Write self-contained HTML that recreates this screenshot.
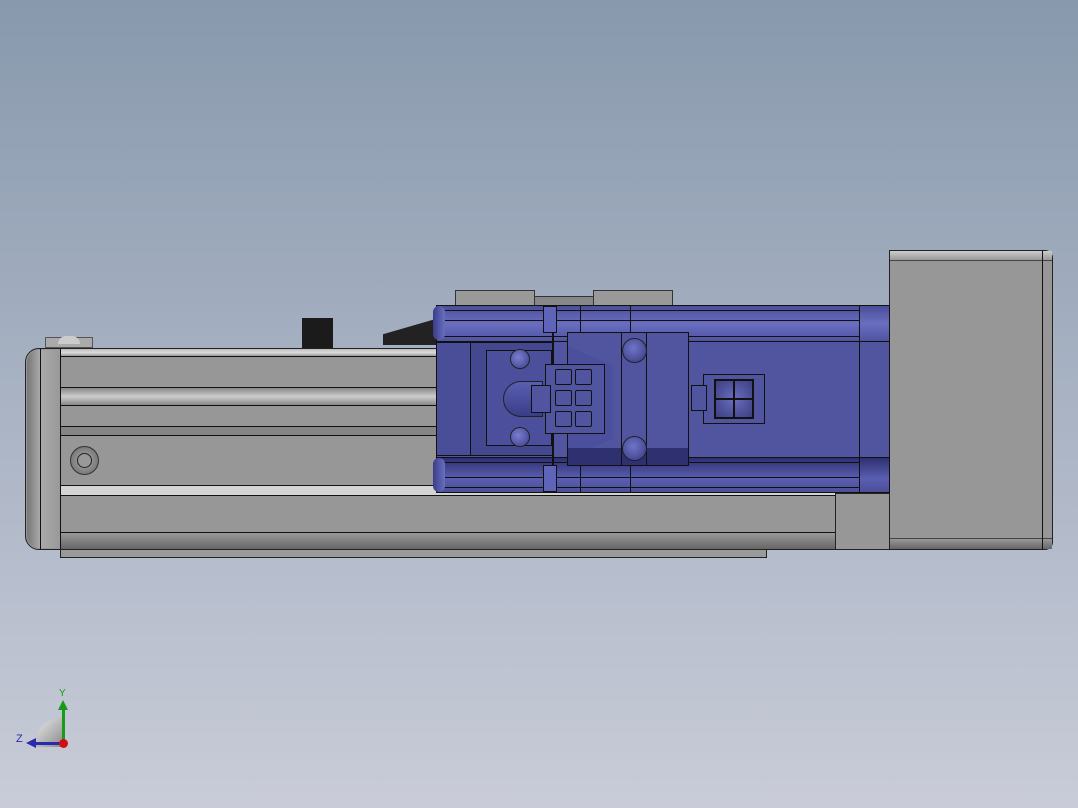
<!DOCTYPE html>
<html><head><style>
body{margin:0;width:1078px;height:808px;overflow:hidden;background:linear-gradient(#8899ad,#a9b3c4 50%,#c9ccd8);position:relative;font-family:"Liberation Sans",sans-serif}
div{position:absolute;box-sizing:border-box}
.l{background:#111}
.b{background:#5155a0;border:1px solid #111}
</style></head><body>
<!-- rail -->
<div style="left:60px;top:548px;width:707px;height:10px;background:#9a9a9a;border:1px solid #222"></div>
<div style="left:25px;top:348px;width:811px;height:202px;background:#979797;border:1px solid #222;border-radius:14px 0 0 14px"></div>
<div style="left:27px;top:350px;width:33px;height:198px;border-radius:12px 0 0 12px;background:linear-gradient(90deg,#777,#aaa 40%,#999)"></div>
<div class="l" style="left:40px;top:349px;width:1px;height:200px"></div>
<div class="l" style="left:60px;top:349px;width:1px;height:200px"></div>
<div style="left:61px;top:349px;width:775px;height:8px;background:linear-gradient(#bbb,#ddd,#999);border-bottom:1px solid #111"></div>
<div style="left:61px;top:387px;width:775px;height:19px;background:linear-gradient(#888,#ccc 50%,#888);border-top:1px solid #111;border-bottom:1px solid #111"></div>
<div style="left:61px;top:426px;width:775px;height:10px;background:#858585;border-top:1px solid #111;border-bottom:1px solid #111"></div>
<div style="left:61px;top:485px;width:775px;height:11px;background:#d4d4d4;border-top:1px solid #111;border-bottom:1px solid #111"></div>
<div class="l" style="left:61px;top:532px;width:775px;height:1px"></div>
<div style="left:61px;top:533px;width:775px;height:16px;background:linear-gradient(#999,#666)"></div>
<div style="left:70px;top:446px;width:29px;height:29px;border-radius:50%;background:radial-gradient(#aaa,#666);border:1px solid #333"></div>
<div style="left:77px;top:453px;width:15px;height:15px;border-radius:50%;border:1px solid #222;background:#999"></div>
<div style="left:45px;top:337px;width:48px;height:11px;background:#aaa;border:1px solid #555"></div>
<div style="left:58px;top:336px;width:22px;height:8px;border-radius:11px 11px 0 0;background:#ccc"></div>
<div style="left:302px;top:318px;width:31px;height:30px;background:#1b1b1b"></div>
<div style="left:383px;top:318px;width:56px;height:27px;background:#222;clip-path:polygon(0 60%,100% 0,100% 100%,0 100%)"></div>
<div style="left:835px;top:493px;width:56px;height:57px;background:#979797;border:1px solid #222"></div>
<!-- motor -->
<div style="left:889px;top:250px;width:164px;height:300px;background:#979797;border:1px solid #222;border-radius:0 8px 8px 0"></div>
<div style="left:890px;top:251px;width:162px;height:10px;background:linear-gradient(#ccc,#999);border-bottom:1px solid #444"></div>
<div style="left:890px;top:538px;width:162px;height:11px;background:linear-gradient(#999,#666);border-top:1px solid #444"></div>
<div class="l" style="left:1042px;top:251px;width:1px;height:298px"></div>
<!-- top plates -->
<div style="left:455px;top:290px;width:80px;height:16px;background:#999;border:1px solid #333"></div>
<div style="left:593px;top:290px;width:80px;height:16px;background:#999;border:1px solid #333"></div>
<div style="left:534px;top:296px;width:60px;height:10px;background:#888;border:1px solid #333"></div>
<!-- blue body -->
<div class="b" style="left:436px;top:305px;width:454px;height:188px;background:#5155a0"></div>
<div style="left:437px;top:306px;width:452px;height:36px;background:linear-gradient(#4a4e98,#6a6ec0 50%,#4f53a0);border-bottom:1px solid #111"></div>
<div class="l" style="left:437px;top:310px;width:422px;height:1px"></div>
<div class="l" style="left:437px;top:320px;width:422px;height:1px"></div>
<div class="l" style="left:437px;top:336px;width:422px;height:1px"></div>
<div style="left:437px;top:457px;width:452px;height:35px;background:linear-gradient(#2d3070,#5a5eb0 60%,#4b4f98);border-top:1px solid #111"></div>
<div class="l" style="left:437px;top:462px;width:422px;height:1px"></div>
<div class="l" style="left:437px;top:477px;width:422px;height:1px"></div>
<div class="l" style="left:437px;top:487px;width:422px;height:1px"></div>
<div style="left:433px;top:306px;width:12px;height:34px;border-radius:6px;background:linear-gradient(90deg,#3a3e88,#6a6ec0)"></div>
<div style="left:433px;top:458px;width:12px;height:34px;border-radius:6px;background:linear-gradient(90deg,#3a3e88,#6a6ec0)"></div>
<div class="l" style="left:859px;top:306px;width:1px;height:186px"></div>
<div class="l" style="left:552px;top:306px;width:2px;height:186px"></div>
<div class="l" style="left:580px;top:306px;width:1px;height:186px"></div>
<div class="l" style="left:630px;top:306px;width:1px;height:186px"></div>
<div style="left:543px;top:306px;width:14px;height:27px;background:#6064b8;border:1px solid #111"></div>
<div style="left:543px;top:465px;width:14px;height:27px;background:#6064b8;border:1px solid #111"></div>
<!-- left housing -->
<div class="b" style="left:436px;top:342px;width:117px;height:114px;background:#4a4e98"></div>
<div style="left:470px;top:343px;width:82px;height:112px;background:#44488e;border-left:1px solid #111"></div>
<div style="left:486px;top:350px;width:66px;height:96px;background:#4c509c;border:1px solid #111"></div>
<div style="left:510px;top:349px;width:20px;height:20px;border-radius:50%;background:radial-gradient(circle at 40% 40%,#7a7ed0,#3a3e88);border:1px solid #222"></div>
<div style="left:510px;top:427px;width:20px;height:20px;border-radius:50%;background:radial-gradient(circle at 40% 40%,#7a7ed0,#3a3e88);border:1px solid #222"></div>
<div style="left:503px;top:381px;width:40px;height:36px;border-radius:18px 0 0 18px;background:linear-gradient(#5a5eb0,#3a3e88);border:1px solid #222"></div>
<!-- center block -->
<div class="b" style="left:567px;top:332px;width:122px;height:134px"></div>
<div style="left:568px;top:333px;width:45px;height:132px;background:#4b4f9c;clip-path:polygon(0 10%,100% 25%,100% 80%,0 95%)"></div>
<div style="left:568px;top:448px;width:120px;height:17px;background:#2e3070"></div>
<div style="left:621px;top:332px;width:26px;height:134px;border-left:1px solid #111;border-right:1px solid #111"></div>
<div style="left:622px;top:338px;width:25px;height:25px;border-radius:50%;background:radial-gradient(circle at 45% 40%,#7074c8,#353980);border:1px solid #222"></div>
<div style="left:622px;top:436px;width:25px;height:25px;border-radius:50%;background:radial-gradient(circle at 45% 40%,#7074c8,#353980);border:1px solid #222"></div>
<!-- 6-pin connector -->
<div class="b" style="left:545px;top:364px;width:60px;height:70px"></div>
<div style="left:555px;top:369px;width:17px;height:16px;border:1px solid #111;border-radius:2px"></div>
<div style="left:575px;top:369px;width:17px;height:16px;border:1px solid #111;border-radius:2px"></div>
<div style="left:555px;top:390px;width:17px;height:16px;border:1px solid #111;border-radius:2px"></div>
<div style="left:575px;top:390px;width:17px;height:16px;border:1px solid #111;border-radius:2px"></div>
<div style="left:555px;top:411px;width:17px;height:16px;border:1px solid #111;border-radius:2px"></div>
<div style="left:575px;top:411px;width:17px;height:16px;border:1px solid #111;border-radius:2px"></div>
<div class="b" style="left:531px;top:385px;width:20px;height:28px"></div>
<!-- 4-pin connector -->
<div class="b" style="left:703px;top:374px;width:62px;height:50px"></div>
<div style="left:714px;top:379px;width:40px;height:40px;background:radial-gradient(#6a6ec0,#3c3f80);border:2px solid #111"></div>
<div style="left:733px;top:379px;width:2px;height:40px;background:#111"></div>
<div style="left:714px;top:398px;width:40px;height:2px;background:#111"></div>
<div class="b" style="left:691px;top:385px;width:16px;height:26px"></div>
<!-- axis triad -->
<div style="left:34px;top:717px;width:30px;height:30px;border-radius:30px 0 0 0;background:linear-gradient(135deg,#eee,#888)"></div>
<div style="left:62px;top:706px;width:3px;height:38px;background:#1a9a1a"></div>
<div style="left:58px;top:700px;width:0;height:0;border-left:5px solid transparent;border-right:5px solid transparent;border-bottom:10px solid #1a9a1a"></div>
<div style="left:34px;top:742px;width:30px;height:3px;background:#2a2ab0"></div>
<div style="left:26px;top:738px;width:0;height:0;border-top:5px solid transparent;border-bottom:5px solid transparent;border-right:10px solid #2a2ab0"></div>
<div style="left:59px;top:739px;width:9px;height:9px;border-radius:50%;background:#d01010"></div>
<div style="left:59px;top:688px;font-size:10px;color:#1a9a1a">Y</div>
<div style="left:16px;top:733px;font-size:11px;color:#2a2ab0">Z</div>
</body></html>
